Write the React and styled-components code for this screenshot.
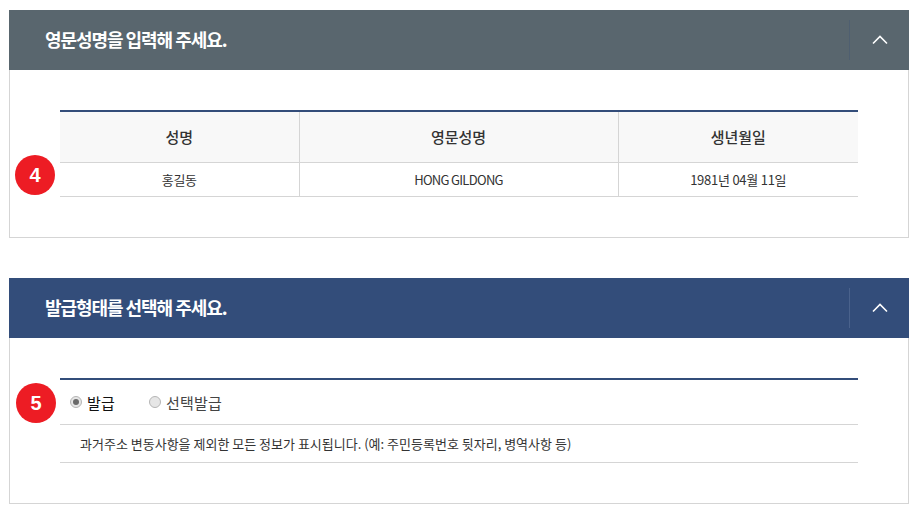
import React from "react";
import styled, { createGlobalStyle } from "styled-components";

const GlobalStyle = createGlobalStyle`
  html, body {
    margin: 0;
    padding: 0;
    background: #fff;
  }
  body {
    font-family: "Noto Sans CJK KR", "Liberation Sans", sans-serif;
    color: #333;
  }
`;

const Page = styled.div`
  width: 900px;
  padding: 10px 0 0 9px;
  display: flex;
  flex-direction: column;
  gap: 40px;
`;

const Panel = styled.section`
  position: relative;
  box-sizing: border-box;
  height: ${(p) => p.$height}px;
  border: 1px solid #d5d5d5;
  border-top: 0;
`;

const PanelHeader = styled.header`
  display: flex;
  align-items: center;
  justify-content: space-between;
  height: 60px;
  margin: 0 -1px;
  padding-left: 36px;
  background: ${(p) => p.$color};
`;

const PanelTitle = styled.h2`
  margin: 0 0 2px;
  font-size: 18px;
  line-height: 24px;
  font-weight: 700;
  letter-spacing: -1.05px;
  color: #fff;
`;

const Toggle = styled.button`
  display: flex;
  align-items: center;
  justify-content: center;
  box-sizing: border-box;
  width: 60px;
  height: 40px;
  padding: 0;
  border: 0;
  border-left: 1px solid ${(p) => p.$line};
  background: none;
`;

const PanelBody = styled.div`
  padding: 40px 50px 0;
`;

const Badge = styled.span`
  position: absolute;
  left: ${(p) => p.$left}px;
  top: ${(p) => p.$top}px;
  display: flex;
  align-items: center;
  justify-content: center;
  width: 40px;
  height: 40px;
  border-radius: 50%;
  background: #ed1c24;
  color: #fff;
  font-family: "Liberation Sans", sans-serif;
  font-size: 20px;
  font-weight: 700;
`;

const Table = styled.table`
  width: 798px;
  border-collapse: collapse;
  table-layout: fixed;
  border-top: 2px solid #334d7a;
`;

const HeadCell = styled.th`
  height: 48px;
  padding: 0 0 2px;
  background: #f8f8f8;
  border-bottom: 1px solid #d5d5d5;
  border-left: 1px solid #d5d5d5;
  font-size: 15px;
  font-weight: 500;
  letter-spacing: 0;
  color: #333;
  &:first-child {
    border-left: 0;
  }
`;

const Cell = styled.td`
  height: 33px;
  padding: 0;
  text-align: center;
  border-bottom: 1px solid #d5d5d5;
  border-left: 1px solid #d5d5d5;
  font-size: 13px;
  font-weight: 400;
  letter-spacing: ${(p) => (p.$latin ? "-0.7px" : "-0.25px")};
  color: #333;
  &:first-child {
    border-left: 0;
  }
`;

const OptionBox = styled.div`
  width: 798px;
  border-top: 2px solid #334d7a;
`;

const RadioRow = styled.div`
  display: flex;
  align-items: center;
  gap: 34px;
  height: 44px;
  padding-left: 10px;
  border-bottom: 1px solid #d5d5d5;
`;

const RadioLabel = styled.label`
  display: flex;
  align-items: center;
  gap: 5px;
  font-size: 15px;
  font-weight: 400;
  letter-spacing: 0.2px;
  color: ${(p) => (p.$on ? "#111" : "#444")};
`;

const RadioDot = styled.span`
  box-sizing: border-box;
  display: flex;
  align-items: center;
  justify-content: center;
  width: 12px;
  height: 12px;
  border-radius: 50%;
  border: 1px solid #b5b5b5;
  background: #e6e6e6;
  &::after {
    content: "";
    display: ${(p) => (p.$on ? "block" : "none")};
    width: 6px;
    height: 6px;
    border-radius: 50%;
    background: #6a6a6a;
  }
`;

const Note = styled.p`
  box-sizing: border-box;
  height: 38px;
  margin: 0;
  padding-left: 20px;
  line-height: 37px;
  border-bottom: 1px solid #d5d5d5;
  font-size: 13px;
  font-weight: 400;
  letter-spacing: 0;
  color: #333;
`;

const Chevron = () => (
  <svg width="16" height="10" viewBox="0 0 16 10" fill="none">
    <path d="M1 8.5 L8 1.5 L15 8.5" stroke="#fff" strokeWidth="1.6" />
  </svg>
);

export default function App() {
  return (
    <>
      <GlobalStyle />
      <Page>
        <Panel $height={228}>
          <PanelHeader $color="#59666e">
            <PanelTitle>영문성명을 입력해 주세요.</PanelTitle>
            <Toggle $line="#4f5f70" aria-label="접기">
              <Chevron />
            </Toggle>
          </PanelHeader>
          <PanelBody>
            <Table>
              <colgroup>
                <col style={{ width: 239 }} />
                <col style={{ width: 319 }} />
                <col style={{ width: 240 }} />
              </colgroup>
              <thead>
                <tr>
                  <HeadCell>성명</HeadCell>
                  <HeadCell>영문성명</HeadCell>
                  <HeadCell>생년월일</HeadCell>
                </tr>
              </thead>
              <tbody>
                <tr>
                  <Cell>홍길동</Cell>
                  <Cell $latin>HONG GILDONG</Cell>
                  <Cell>1981년 04월 11일</Cell>
                </tr>
              </tbody>
            </Table>
          </PanelBody>
          <Badge $left={5} $top={145}>4</Badge>
        </Panel>
        <Panel $height={226}>
          <PanelHeader $color="#334d7a">
            <PanelTitle>발급형태를 선택해 주세요.</PanelTitle>
            <Toggle $line="#4a628c" aria-label="접기">
              <Chevron />
            </Toggle>
          </PanelHeader>
          <PanelBody>
            <OptionBox>
              <RadioRow>
                <RadioLabel $on>
                  <RadioDot $on />
                  발급
                </RadioLabel>
                <RadioLabel>
                  <RadioDot />
                  선택발급
                </RadioLabel>
              </RadioRow>
              <Note>과거주소 변동사항을 제외한 모든 정보가 표시됩니다. (예: 주민등록번호 뒷자리, 병역사항 등)</Note>
            </OptionBox>
          </PanelBody>
          <Badge $left={6} $top={105}>5</Badge>
        </Panel>
      </Page>
    </>
  );
}
